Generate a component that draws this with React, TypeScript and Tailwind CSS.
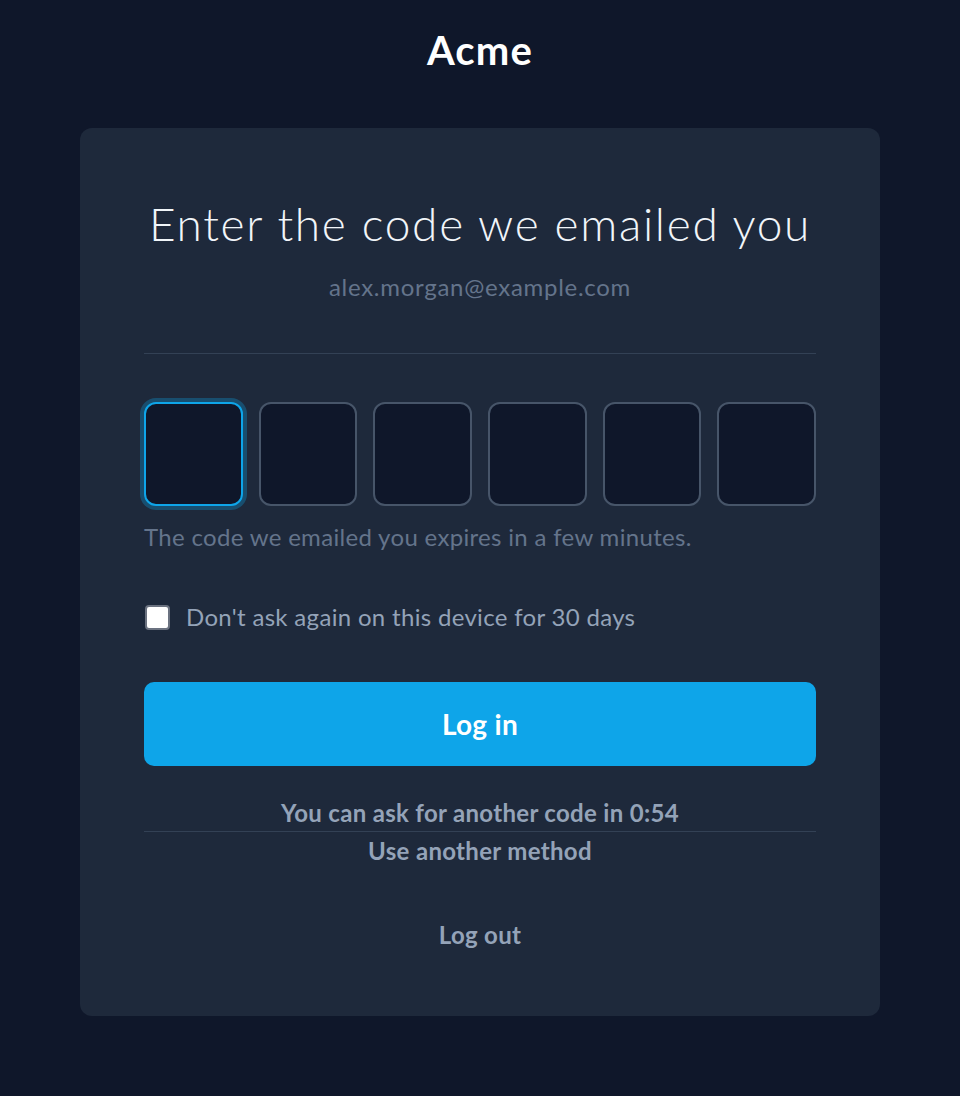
import { useState } from 'react'

const DIGITS = [0, 1, 2, 3, 4, 5]

export default function App() {
  const [code, setCode] = useState<string[]>(['', '', '', '', '', ''])
  const [remember, setRemember] = useState(false)

  return (
    <div className="min-h-screen bg-[#0f172a] font-['Lato',_'Noto_Sans',_sans-serif] pb-20 tracking-[0.02em]">
      <div className="pt-[26px] text-center">
        <h1 className="text-[40px] leading-[48px] font-bold text-white tracking-[0.03em]">Acme</h1>
      </div>

      <div className="mx-20 mt-[54px] rounded-xl bg-[#1e293b] px-16 pt-[66px] pb-[65px]">
        <h2 className="text-center text-[46px] leading-[60px] font-light text-[#f1f5f9] tracking-[0.037em]">
          Enter the code we emailed you
        </h2>
        <p className="mt-[17px] text-center text-[24px] leading-8 text-[#64748b] tracking-[0.03em]">alex.morgan@example.com</p>

        <div className="mt-[50px] border-t border-[#334155]" />

        <div className="mt-[48px] flex gap-4">
          {DIGITS.map(i => (
            <input
              key={i}
              value={code[i]}
              maxLength={1}
              onChange={e => {
                const next = [...code]
                next[i] = e.target.value
                setCode(next)
              }}
              className={`h-[104px] min-w-0 flex-1 rounded-xl bg-[#0f172a] text-center text-4xl text-white outline-none ${
                i === 0
                  ? 'border-2 border-[#0ea5e9] ring-4 ring-[#0ea5e9]/30'
                  : 'border-2 border-[#475569]'
              }`}
            />
          ))}
        </div>
        <p className="mt-[15px] text-[24px] leading-8 text-[#64748b]">The code we emailed you expires in a few minutes.</p>

        <label className="mt-[48px] flex items-center gap-4">
          <input
            type="checkbox"
            checked={remember}
            onChange={e => setRemember(e.target.checked)}
            className="ml-px h-[25px] w-[25px] appearance-none rounded border-2 border-[#6b7280] bg-white checked:bg-[#0ea5e9]"
          />
          <span className="text-[24px] leading-8 text-[#94a3b8]">Don&apos;t ask again on this device for 30 days</span>
        </label>

        <button className="mt-[49px] h-[84px] w-full rounded-[10px] bg-[#0ea5e9] text-[28px] font-bold text-white">
          Log in
        </button>

        <p className="mt-[31px] text-center text-[24px] font-bold text-[#94a3b8] leading-8">
          You can ask for another code in 0:54
        </p>
        <div className="mt-[2px] border-t border-[#334155]" />
        <button className="mt-[3px] block w-full text-center text-[24px] font-bold text-[#94a3b8] leading-8">
          Use another method
        </button>
        <button className="mt-[52px] block w-full text-center text-[24px] font-bold text-[#94a3b8] leading-8">
          Log out
        </button>
      </div>
    </div>
  )
}
